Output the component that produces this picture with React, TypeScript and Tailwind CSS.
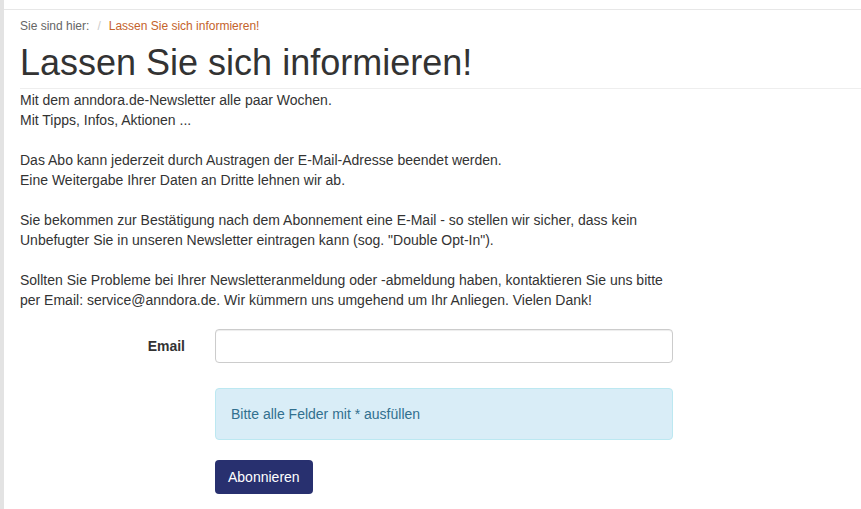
export default function App() {
  return (
    <div className="flex min-h-[509px] bg-white font-['Liberation_Sans',Arial,sans-serif] text-[14px] leading-[20px] text-[#333]">
      {/* left edge strip */}
      <div className="w-[4px] shrink-0 bg-[#e3e3e3]" />

      <div className="mt-[9px] flex-1 border-t border-[#e7e7e7]">
        {/* breadcrumb */}
        <div className="flex items-center gap-[7px] pl-[16px] pt-[8px] text-[12px] leading-[17px]">
          <span className="pr-[1px] text-[#666]">Sie sind hier:</span>
          <span className="text-[#ccc]">/</span>
          <span className="pl-[1px] text-[#c4632c]">Lassen Sie sich informieren!</span>
        </div>

        {/* page header */}
        <div className="ml-[16px] border-b border-[#eee] pb-[5px] pt-[8px]">
          <h1 className="text-[36px] font-normal leading-[39.6px] text-[#333]">
            Lassen Sie sich informieren!
          </h1>
        </div>

        <div className="pl-[16px] pt-[1px]">
          <p>
            Mit dem anndora.de-Newsletter alle paar Wochen.
            <br />
            Mit Tipps, Infos, Aktionen ...
            <br />
            <br />
            Das Abo kann jederzeit durch Austragen der E-Mail-Adresse beendet werden.
            <br />
            Eine Weitergabe Ihrer Daten an Dritte lehnen wir ab.
            <br />
            <br />
            Sie bekommen zur Bestätigung nach dem Abonnement eine E-Mail - so stellen wir sicher, dass kein
            <br />
            Unbefugter Sie in unseren Newsletter eintragen kann (sog. "Double Opt-In").
            <br />
            <br />
            Sollten Sie Probleme bei Ihrer Newsletteranmeldung oder -abmeldung haben, kontaktieren Sie uns bitte
            <br />
            per Email: service@anndora.de. Wir kümmern uns umgehend um Ihr Anliegen. Vielen Dank!
          </p>

          {/* form */}
          <form className="mt-[19px]" onSubmit={(e) => e.preventDefault()}>
            <div className="flex items-center">
              <label className="w-[165px] shrink-0 text-right text-[14px] font-bold text-[#333]">
                Email
              </label>
              <input
                type="email"
                className="ml-[30px] h-[34px] w-[458px] rounded-[4px] border border-[#ccc] px-[12px] text-[14px] shadow-[inset_0_1px_1px_rgba(0,0,0,0.075)] outline-none"
              />
            </div>

            <div className="ml-[195px] mt-[25px] w-[458px] rounded-[4px] border border-[#bce8f1] bg-[#d9edf7] p-[15px] text-[#31708f]">
              Bitte alle Felder mit * ausfüllen
            </div>

            <div className="ml-[195px] mt-[20px]">
              <button
                type="submit"
                className="h-[34px] rounded-[4px] bg-[#28306f] px-[13px] text-[14px] text-white"
              >
                Abonnieren
              </button>
            </div>
          </form>
        </div>
      </div>
    </div>
  )
}
